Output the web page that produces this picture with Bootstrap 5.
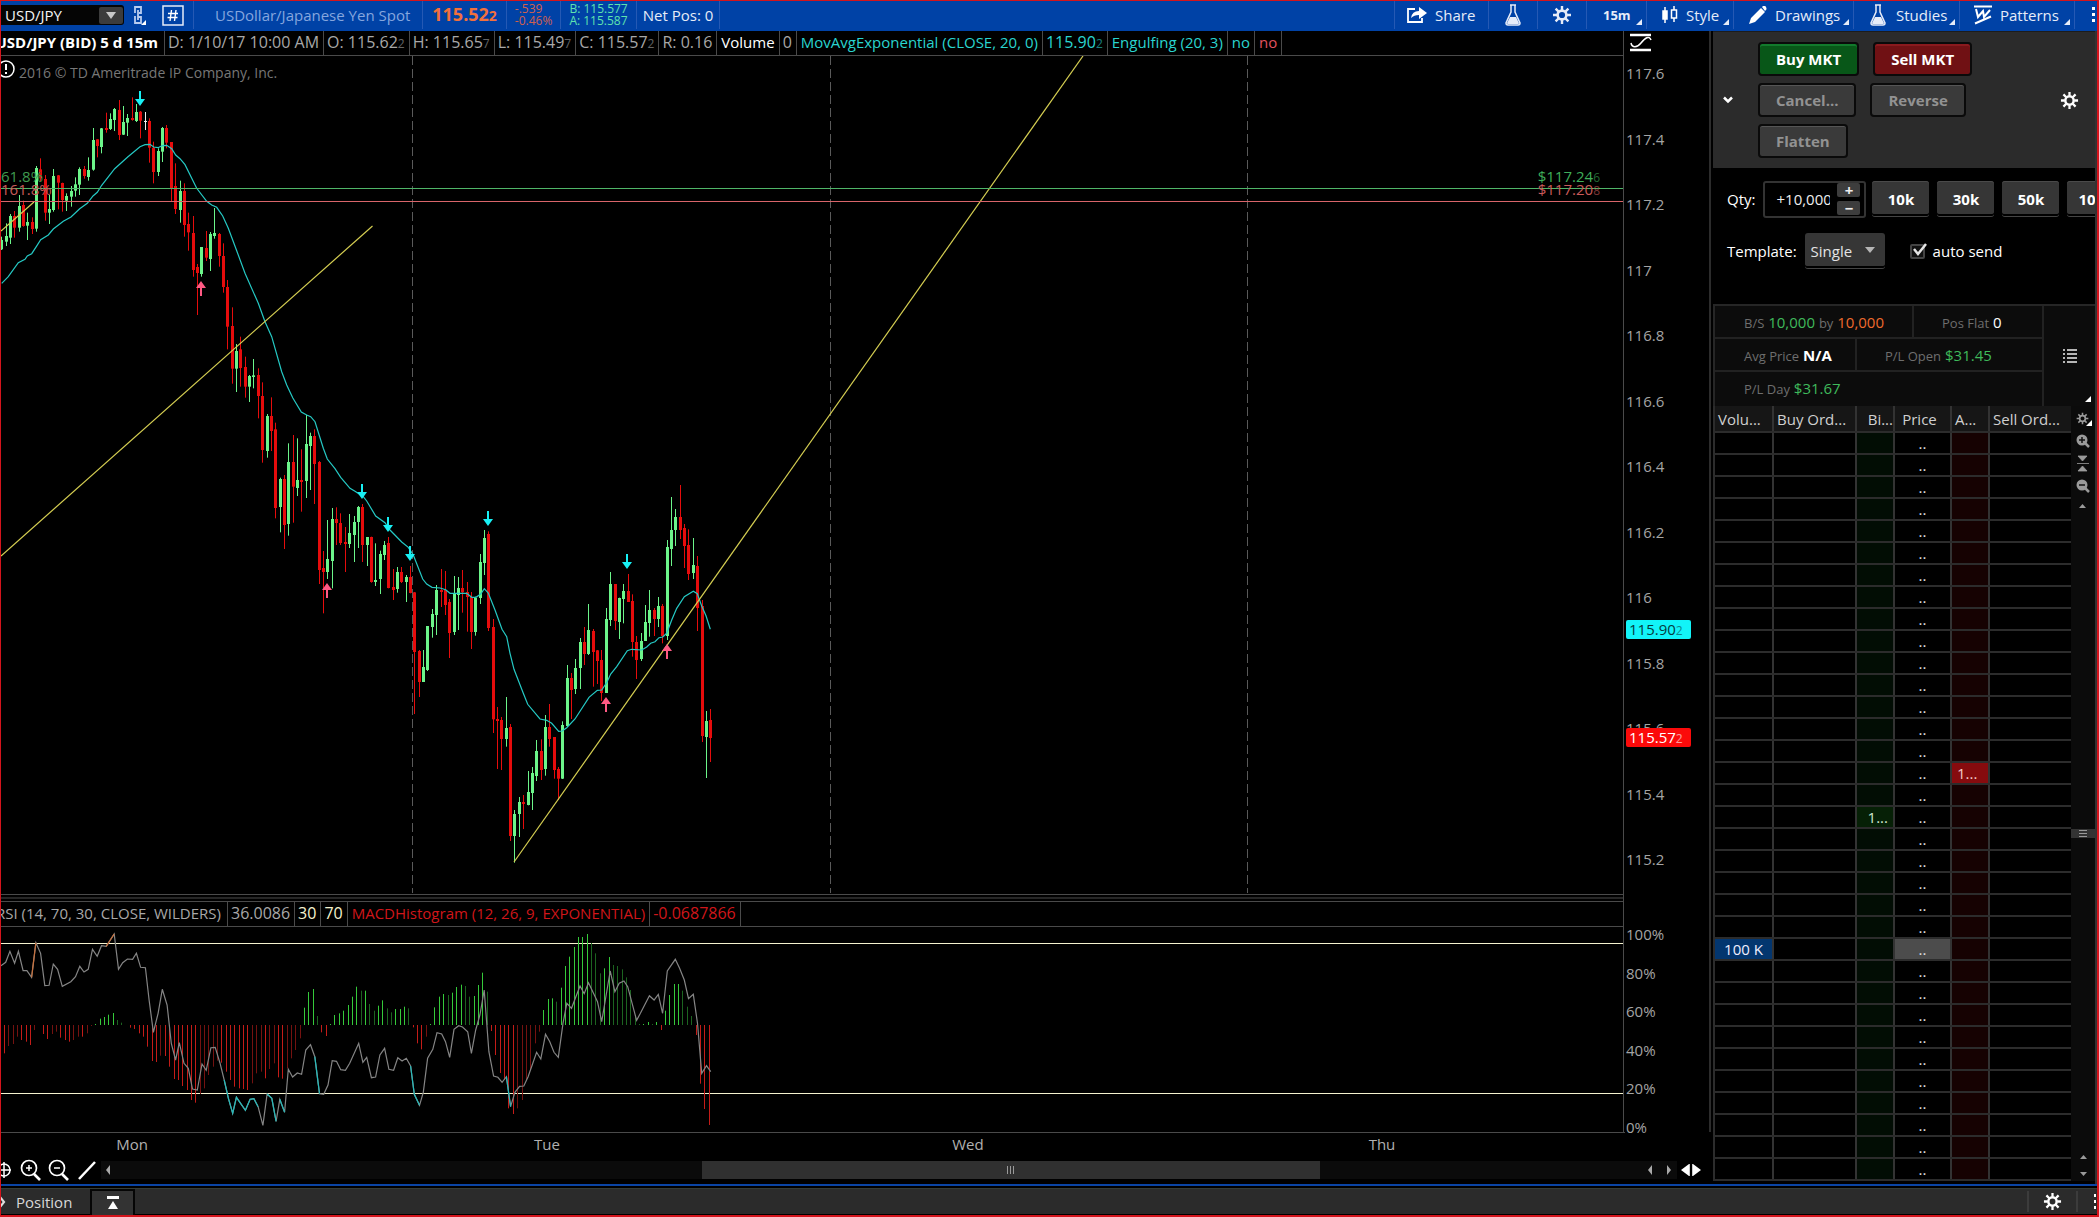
<!DOCTYPE html>
<html lang="en" data-bs-theme="dark">
<head>
<meta charset="utf-8">
<meta name="viewport" content="width=device-width, initial-scale=1">
<title>USD/JPY chart</title>
<link href="https://cdn.jsdelivr.net/npm/bootstrap@5.3.0/dist/css/bootstrap.min.css" rel="stylesheet">
<style>
:root{--rule:#4a4a4a;--grid:#2c2c2c;--blue:#0042a6}
body{font:15px/20px "Open Sans","Noto Sans",sans-serif;background:#000;color:#d8d8d8;min-height:100vh;border:solid #d4141c;border-width:1px 2px 2px 1px;overflow-x:hidden}
svg{display:block;flex:none}
button{font:inherit;color:inherit;background:none;border:0;padding:0}
svg text{font-size:15px}
svg text.notice{font-size:14px}
.pip{font-size:12px;opacity:.6}
.cy{color:#2ad4cf}.pk{color:#e0525f}.rd{color:#d0161a}.ivory{color:#f5f3cf}
.gn{color:#3fb95b}.og{color:#ee6a2c}
/* top toolbar */
.topbar{background:var(--blue);height:30px;padding-bottom:2px;color:#e6ecf8;overflow:hidden}
.topbar>*{flex:none;height:28px;border-right:1px solid #2559b4;display:flex;align-items:center;position:relative}
.topbar .corner{position:absolute;right:4px;bottom:4px}
.symbox{width:123px;height:20px;background:#050505;border-radius:0 3px 3px 0;overflow:hidden}
.symbox input{width:98px;background:none;border:0;color:#f4f4f4;padding:0 0 0 4px;height:20px}
.symbox button{width:24px;height:17px;background:#3c3c3c;border-radius:2px;display:flex;align-items:center;justify-content:center}
.desc{color:#85a6de;padding:0 12px 0 21px}
.quote{padding:0 9px}
.lastpx{color:#f2703c;font-size:18px;font-weight:700}
.lastpx .pip{font-size:14px;opacity:1}
.two{font-size:12px;line-height:12px}
.chg{color:#d2604e}.bidask{color:#5fe3ae}
.netpos{padding:0 6px}
.tfm{font-size:13px;font-weight:700}
.topbar .tool-share{width:95px;padding-left:12px;border-left:1px solid #2559b4}
.tool-ic{width:49px}.topbar .tool-tf{width:60px;padding-left:16px}
.topbar .tool-style{width:87px;padding-left:14px}.topbar .tool-draw{width:120px;padding-left:15px}
.topbar .tool-stud{width:106px;padding-left:14px}.topbar .tool-pat{width:115px;padding-left:14px}
.topbar .tool-more{width:22px;padding-left:17px;overflow:hidden}
/* study strips */
.strip{height:25px;border-bottom:1px solid var(--rule);color:#a8a8a8;overflow:hidden}
.strip>span{flex:none;border-right:1px solid var(--rule);padding:0 4px;line-height:23px;white-space:nowrap;display:block}
.strip>.num{font-size:16px;padding:0 4px 0 3px}
.strip .cut{display:flex;justify-content:flex-end;overflow:hidden;padding-right:6px}
.c-name{width:164px}.c-rsi{width:227px}
.chartcol{min-width:0}
.plotcol{min-width:0;border-right:1px solid var(--rule)}
.axiscol{width:87px;border-right:2px solid #2c2c2c}
.axiscol svg{overflow:visible}
.splitter{height:8px;border:solid var(--rule);border-width:1px 0}
.splitter i{display:block;height:2px;margin:2px 0;background:#262626}
.toolsrow{height:24px;margin-top:-2px;padding-right:6px}
.track{background:#0b0b0b;height:18px}
.thumb{background:#303030;height:18px;width:39.2%;margin-left:37.5%}
/* order panel */
.side{width:386px;border-right:2px solid #333;padding-left:2px}
.ordbox{background:#2b2b2b;height:137px;border-top:1px solid #1c1c1c}
.chev{padding-left:10px;width:45px;text-align:left}
.btnrow{gap:14px}
.btnstack{gap:7px}
.trade{border:2px solid #0a0a0a;border-radius:4px;font-weight:700;height:34px;padding:0 16px;color:#fff;background:#3a3a3a;box-shadow:inset 0 1px #555}
.trade.buy{background:#085718;box-shadow:inset 0 2px #127a2c}
.trade.sell{background:#701114;box-shadow:inset 0 2px #8a1a1e}
.trade.off{color:#929292}
.qtyrow{padding:3px 0 0 14px;height:59px;gap:8px}
.qtybox{width:103px;height:37px;border:2px solid #333;border-radius:3px;color:#eee;margin-right:-2px}
.qtybox input{width:54px;background:none;border:0;padding:0;color:inherit;margin-left:11px}
.qtybox button{width:23px;height:14px;background:#3d3d3d;line-height:12px;border-radius:2px;font-weight:700;display:block}
.preset{width:57px;height:36px;flex:none;background:#363636;border-radius:3px;font-weight:700;color:#fff;border-bottom:1px solid #444;box-shadow:inset 0 1px #4a4a4a,inset 0 -2px #000}
.tmplrow{padding-left:14px;height:48px;gap:8px;margin-bottom:29px}
.tmpl{width:80px;height:36px;background:#363636;color:#e4e4e4;border:0;border-bottom:1px solid #444;border-radius:3px;appearance:none;padding:0 6px;box-shadow:inset 0 -2px #000}
.selcaret{right:10px;top:14px}
.tick{appearance:none;width:15px;height:15px;margin:0;border:2px solid #444;border-radius:2px;background:#111}
.tickwrap{margin-left:17px}.tickmark{left:0;top:-2px}
.posbox{border:2px solid #262626;border-right:0;border-bottom:0;background:#0c0c0c;height:102px}
.posbox .lab{font-size:13px;color:#6e6e6e}
.posbox .line{border-bottom:2px solid #222;height:33px;padding-left:29px}
.posbox .cellr{border-right:2px solid #222;height:32px;line-height:32px}
.poscells{width:329px;border-right:2px solid #222}
.p1{width:170px}.p2{width:113px}.p1b,.p2b{line-height:32px;padding-left:28px}
table.ladder{table-layout:fixed;width:358px;border-collapse:collapse;border-left:2px solid #2c2c2c;flex:none}
.ladder th{height:26px;background:#161616;font-weight:400;color:#d0d0d0;padding:0 0 0 3px;overflow:hidden;white-space:nowrap}
.ladder th.mid{padding:0 6px 0 0;text-align:center}
.ladder td{height:22px;padding:0;line-height:20px;text-align:center;white-space:nowrap;color:#e0e0e0}
.ladder td.px{padding-top:1px;line-height:19px}
.ladder th,.ladder td{border-right:2px solid #333;border-bottom:2px solid var(--grid)}
.ladder th:last-child,.ladder td:last-child{border-right:0}
.ladder td.bid{background:#020d04}.ladder td.ask{background:#160202}
.ladder td.bidon{background:#062006;color:#cfe6cf;text-align:right;padding-right:5px}
.ladder td.askon{background:#860b0e;color:#f2caca;text-align:left;padding-left:5px}
.ladder td.vol{background:#03366f;color:#eef}
.ladder td.cur{background:#4c4c4c}
.rail{background:#0b0b0b;width:23px}
.rail .grip{background:#333;width:100%;height:9px}
.railtop{height:313px}
/* status bar */
.botbar{border-top:2px solid #0a44a4;height:31px}
.botbar>div{background:#2b2b2b;height:26px;margin-top:2px;border-top:1px solid #333c38}
.posbtn span{padding:0 18px 0 9px}
.tabup{width:45px;height:26px;background:#333;border:solid #050505;border-width:2px 2px 0}
.bsep{border-left:2px solid #3c3c3c;height:21px}
.botgear{padding:0 14px}.botmore{padding-left:16px}
</style>
<script src="https://cdn.jsdelivr.net/npm/bootstrap@5.3.0/dist/js/bootstrap.bundle.min.js"></script>
</head>
<body class="d-flex flex-column m-0">
<svg width="0" height="0" class="position-absolute" aria-hidden="true">
<defs>
<symbol id="gear" viewBox="0 0 20 20"><g stroke="currentColor" stroke-width="2.4"><path d="M10 1v4M10 15v4M1 10h4M15 10h4M3.6 3.6l3 3M13.4 13.4l3 3M3.6 16.4l3-3M13.4 6.600l3-3"/></g><circle cx="10" cy="10" r="4.400" fill="none" stroke="currentColor" stroke-width="2.600"/></symbol>
<symbol id="flask" viewBox="0 0 20 22"><path d="M7 1h6M8 1v7L3 19q0 2 2 2h10q2 0 2-2L12 8V1" fill="none" stroke="currentColor" stroke-width="1.500"/><path d="M7 13h6l3 6q0 1-1 1H5q-1 0-1-1z" fill="currentColor"/></symbol>
<symbol id="corner" viewBox="0 0 6 6"><path d="M6 0v6H0z" fill="currentColor"/></symbol>
<symbol id="mag" viewBox="0 0 22 22"><circle cx="9" cy="9" r="7.500" fill="none" stroke="currentColor" stroke-width="1.700"/><path d="M14 15l6 6" stroke="currentColor" stroke-width="2.600"/></symbol>
</defs></svg>

<header class="topbar d-flex">
  <div class="border-0"><div class="symbox d-flex align-items-center">
    <input type="text" value="USD/JPY" aria-label="Symbol">
    <button type="button" aria-label="Open symbol list"><svg width="10" height="7"><path d="M0 0h10L5 7z" fill="#c8c8c8"/></svg></button></div></div>
  <button type="button" class="border-0 justify-content-center" aria-label="Link"><svg width="30" height="24" fill="none" stroke="#b9cdf0" stroke-width="1.800"><path d="M11 10V4h6v6h-2M11 13v7h6v-6h-3M14 7v10"/><path d="M22 17v5h-5z" fill="#fff" stroke="none"/></svg></button>
  <button type="button" class="px-2" aria-label="Number"><svg width="23" height="21"><rect x="1" y="1" width="20" height="19" fill="none" stroke="#e6ecf8" stroke-width="1.500"/><path d="M9.500 5l-1.500 11M14 5l-1.500 11M6 8.500h10M5.500 12.500h10" stroke="#fff" stroke-width="1.400"/></svg></button>
  <div class="desc text-nowrap">USDollar/Japanese Yen Spot</div>
  <div class="quote lastpx"><span>115.52<span class="pip">2</span></span></div>
  <div class="two chg px-2"><span>-.539<br>-0.46%</span></div>
  <div class="two px-2 bidask"><span>B: 115.577<br>A: 115.587</span></div>
  <div class="netpos">Net Pos: 0</div>
  <div class="flex-fill border-0"></div>
  <button type="button" class="gap-2 tool-share"><svg width="20" height="18" fill="none" stroke="#fff" stroke-width="1.800"><path d="M8 3H1v13h14v-4"/><path d="M4 12q1-7 8-7V1l8 6-8 6V9q-5 0-8 3z" fill="#fff" stroke="none"/></svg>Share</button>
  <button type="button" class="tool-ic justify-content-center" aria-label="Analyze"><svg width="20" height="22"><use href="#flask"/></svg></button>
  <button type="button" class="tool-ic justify-content-center" aria-label="Settings"><svg width="20" height="20"><use href="#gear"/></svg></button>
  <button type="button" class="tool-tf tfm">15m<svg class="corner" width="6" height="6"><use href="#corner"/></svg></button>
  <button type="button" class="tool-style gap-2"><svg width="17" height="20" fill="none" stroke="#fff" stroke-width="1.500"><path d="M4 2v16M13 1v4M13 13v4"/><rect x="2" y="6" width="4" height="8" fill="#fff"/><rect x="10.500" y="5" width="5" height="8"/></svg>Style<svg class="corner" width="6" height="6"><use href="#corner"/></svg></button>
  <button type="button" class="tool-draw gap-2"><svg width="18" height="18"><path d="M0 18l2-6L12 2l4 4L6 16zM13 1l1-1q2-1 3 1t0 3l-1 1z" fill="#fff"/></svg>Drawings<svg class="corner" width="6" height="6"><use href="#corner"/></svg></button>
  <button type="button" class="tool-stud gap-2"><svg width="20" height="22"><use href="#flask"/></svg>Studies<svg class="corner" width="6" height="6"><use href="#corner"/></svg></button>
  <button type="button" class="tool-pat gap-2"><svg width="18" height="20" fill="none" stroke="#fff" stroke-width="1.800"><path d="M0 1.500h18M1 18.500l16-7M2 4l2 8 5-6 1 6 6-7" stroke-width="2"/></svg>Patterns<svg class="corner" width="6" height="6"><use href="#corner"/></svg></button>
  <button type="button" class="tool-more border-0" aria-label="More"><svg width="4" height="16" fill="#fff"><path d="M0 0h3v3H0zM0 6h3v3H0zM0 12h3v3H0z"/></svg></button>
</header>

<main class="d-flex flex-fill">
  <section class="flex-fill d-flex flex-column chartcol">
    <div class="d-flex">
      <div class="plotcol flex-fill">
        <div class="strip d-flex">
          <span class="cut c-name fw-bold text-white">USD/JPY (BID) 5 d 15m</span><span class="num">D: 1/10/17 10:00 AM</span><span class="num">O: 115.62<span class="pip">2</span></span><span class="num">H: 115.65<span class="pip">7</span></span><span class="num">L: 115.49<span class="pip">7</span></span><span class="num">C: 115.57<span class="pip">2</span></span><span class="num">R: 0.16</span><span class="text-white">Volume</span><span class="num">0</span><span class="cy">MovAvgExponential (CLOSE, 20, 0)</span><span class="num cy">115.90<span class="pip">2</span></span><span class="cy">Engulfing (20, 3)</span><span class="cy">no</span><span class="pk">no</span>
        </div>
        <svg id="price" width="100%" height="838" role="img" aria-label="USD/JPY 15 minute candles"></svg>
        <div class="splitter"><i></i></div>
        <div class="strip d-flex">
          <span class="cut c-rsi">RSI (14, 70, 30, CLOSE, WILDERS)</span><span class="num">36.0086</span><span class="num ivory">30</span><span class="num ivory">70</span><span class="rd">MACDHistogram (12, 26, 9, EXPONENTIAL)</span><span class="num rd">-0.0687866</span>
        </div>
        <svg id="study" width="100%" height="205" role="img" aria-label="RSI and MACD histogram"></svg>
      </div>
      <div class="axiscol">
        <svg id="scale" width="84" height="1101" role="img" aria-label="Price scale"></svg>
      </div>
    </div>
    <svg id="days" width="100%" height="28" role="img" aria-label="Days"></svg>
    <div class="d-flex align-items-center toolsrow">
      <svg width="100" height="24" fill="none" stroke="#fff"><circle cx="3" cy="12" r="6" stroke-width="1.500"/><path d="M3 4v16M-4 12h14" stroke-width="1.500"/>
        <g color="#fff"><use href="#mag" x="19" y="1" width="22" height="22"/><use href="#mag" x="47" y="1" width="22" height="22"/></g><path d="M25 10h6M28 7v6M53 10h6" stroke-width="1.500"/><path d="M78 21l16-17" stroke-width="2.500"/></svg>
      <div class="track flex-fill d-flex align-items-center">
        <svg width="6" height="10" class="ms-1"><path d="M5 0v10L1 5z" fill="#aaa"/></svg>
        <div class="thumb d-flex justify-content-center align-items-center"><svg width="7" height="8"><path d="M.5 0v8M3.500 0v8M6.500 0v8" stroke="#999"/></svg></div>
        <svg width="26" height="10" class="ms-auto me-1"><path d="M5 0v10L1 5zM20 0v10l4-5z" fill="#aaa"/></svg>
      </div>
      <svg width="28" height="16"><path d="M12 2v12L4 8zM16 2v12l8-6z" fill="#fff"/><path d="M12.500 2v12M15.500 2v12" stroke="#ccc"/></svg>
    </div>
  </section>

  <aside class="side flex-shrink-0">
    <div class="ordbox d-flex align-items-center">
      <button type="button" class="chev" aria-label="Collapse"><svg width="10" height="8"><path d="M1 1.500l4 4 4-4" fill="none" stroke="#fff" stroke-width="2.500"/></svg></button>
      <div class="flex-fill d-flex flex-column btnstack">
        <div class="d-flex btnrow"><button type="button" class="trade buy">Buy MKT</button><button type="button" class="trade sell">Sell MKT</button></div>
        <div class="d-flex btnrow"><button type="button" class="trade off">Cancel...</button><button type="button" class="trade off">Reverse</button></div>
        <div class="d-flex btnrow"><button type="button" class="trade off">Flatten</button></div>
      </div>
      <button type="button" class="text-white pe-3" aria-label="Order settings"><svg width="19" height="19"><use href="#gear"/></svg></button>
    </div>
    <div class="qtyrow d-flex align-items-center text-white overflow-hidden">
      <label for="qty">Qty:</label>
      <div class="qtybox d-flex align-items-center justify-content-between flex-shrink-0"><input id="qty" type="text" value="+10,000">
        <div class="d-flex flex-column gap-1 me-1"><button type="button">+</button><button type="button">−</button></div></div>
      <button type="button" class="preset">10k</button><button type="button" class="preset">30k</button><button type="button" class="preset">50k</button><button type="button" class="preset">100k</button>
    </div>
    <div class="tmplrow d-flex align-items-center text-white">
      <label for="tmpl">Template:</label>
      <div class="position-relative"><select id="tmpl" class="tmpl"><option>Single</option></select><svg class="selcaret position-absolute" width="10" height="6"><path d="M0 0h10L5 6z" fill="#b5b5b5"/></svg></div>
      <div class="position-relative tickwrap"><input id="auto" class="tick d-block" type="checkbox" checked><svg class="tickmark position-absolute" width="18" height="16"><path d="M4 7l4 5 8-10" fill="none" stroke="#e6e6e6" stroke-width="2.500"/></svg></div>
      <label for="auto">auto send</label>
    </div>
    <div class="posbox d-flex">
      <div class="poscells">
        <div class="line d-flex"><div class="cellr p1"><span class="lab">B/S</span> <span class="gn">10,000</span> <span class="lab">by</span> <span class="og">10,000</span></div><div class="p1b"><span class="lab">Pos Flat</span> <span class="text-white">0</span></div></div>
        <div class="line d-flex"><div class="cellr p2"><span class="lab">Avg Price</span> <b class="text-white">N/A</b></div><div class="p2b"><span class="lab">P/L Open</span> <span class="gn">$31.45</span></div></div>
        <div class="line d-flex border-0"><div class="p2b ps-0"><span class="lab">P/L Day</span> <span class="gn">$31.67</span></div></div>
      </div>
      <div class="flex-fill d-flex align-items-center justify-content-center position-relative"><svg width="14" height="14"><path d="M0 1h2M0 5h2M0 9h2M0 13h2M4 1h10M4 5h10M4 9h10M4 13h10" stroke="#eee" stroke-width="1.600"/></svg><svg class="position-absolute bottom-0 end-0 me-1 mb-1 text-white" width="6" height="6"><use href="#corner"/></svg></div>
    </div>
    <div class="d-flex">
      <table class="ladder">
        <colgroup><col style="width:59px"><col style="width:83px"><col style="width:38px"><col style="width:57px"><col style="width:38px"><col></colgroup>
        <thead><tr><th>Volu...</th><th>Buy Ord...</th><th class="text-end pe-0">Bi...</th><th class="mid">Price</th><th>A...</th><th>Sell Ord...</th></tr></thead>
        <tbody id="ladder"></tbody>
      </table>
      <div class="rail flex-fill d-flex flex-column align-items-center">
        <svg width="23" height="110" color="#9a9a9a"><use href="#gear" x="4" y="6" width="13" height="13"/><path d="M20 14v6h-6z" fill="#fff"/>
          <g id="zin"><circle cx="10" cy="34" r="5.500" fill="#9a9a9a"/><path d="M13 37l4 4" stroke="#9a9a9a" stroke-width="2.500"/><path d="M7 34h6" stroke="#111" stroke-width="1.500"/></g><path d="M10 31v6" stroke="#111" stroke-width="1.500"/>
          <path d="M6 50h9l-4.500 5zM6 65h9l-4.500-5zM5 57.500h12" fill="#9a9a9a" stroke="#9a9a9a" stroke-width=".8"/>
          <use href="#zin" y="45"/><path d="M7 102h7l-3.500-4z" fill="#9a9a9a"/></svg>
        <div class="railtop"></div>
        <div class="grip d-flex justify-content-center align-items-center"><svg width="8" height="7"><path d="M0 .5h8M0 3.500h8M0 6.500h8" stroke="#999"/></svg></div>
        <svg class="mt-auto" width="9" height="34"><path d="M1 12h7L4.500 8zM1 25h7l-3.500 4z" fill="#9a9a9a"/></svg>
      </div>
    </div>
  </aside>
</main>

<footer class="botbar"><div class="d-flex align-items-center">
  <button type="button" class="d-flex align-items-center posbtn"><svg width="6" height="12"><path d="M-1 1l4 5-4 5" fill="none" stroke="#ddd" stroke-width="2.200"/></svg><span>Position</span></button>
  <button type="button" class="tabup d-flex align-items-center justify-content-center" aria-label="Expand"><svg width="12" height="13"><path d="M0 0h12v3H0zM6 5l5 8H1z" fill="#fff"/></svg></button>
  <div class="flex-fill"></div><span class="bsep"></span>
  <button type="button" class="text-white botgear" aria-label="Settings"><svg width="19" height="19"><use href="#gear"/></svg></button>
  <span class="bsep"></span><button type="button" class="botmore" aria-label="More"><svg width="3" height="16" fill="#fff"><path d="M0 0h2v3H0zM0 6h2v3H0zM0 12h2v3H0z"/></svg></button>
</div></footer>

<script>
const NS='http://www.w3.org/2000/svg', STEP=4.35, X0=1.67;
const el=(p,n,a,t)=>{const e=document.createElementNS(NS,n);for(const k in a)e.setAttribute(k,a[k]);if(t!=null)e.innerHTML=t;p.appendChild(e);return e};
// candles: colour, high, body top, body bottom, low (in thirds of a pixel from the session base)
const sessions=[
{base:80,rows:`G 470 480 508 510|G 430 468 485 498|G 402 408 473 492|R 393 408 443 473|G 345 378 443 455|R 362 375 438 440|G 398 426 437 480|R 412 426 447 462|G 258 264 446 455|R 235 268 295 305|R 285 297 398 422|G 345 387 398 432|G 267 288 390 395|R 285 286 308 388|R 308 309 360 395|G 340 348 362 393|G 318 333 350 380|G 292 313 332 350|G 262 267 314 345|R 258 267 288 296|G 232 270 291 302|G 144 180 269 272|R 178 178 198 232|G 144 145 201 220|R 98 144 150 158|G 100 117 147 150|G 84 87 120 153|R 60 90 165 180|G 78 126 164 165|G 102 114 128 168|R 52 114 120 122|G 72 96 123 126|R 93 95 122 175|W 96 123 126 150|R 115 123 203 248|R 185 203 276 310|G 205 213 276 288|G 141 144 215 246|R 135 144 188 205|R 186 186 325 365|R 250 318 387 402|G 302 333 390 428|R 310 333 435 470|R 398 432 457 512|R 408 459 570 590|R 552 561 579 705|G 501 501 582 590|R 453 504 533 543|G 456 462 537 573|G 384 459 468 476|R 459 462 528 560|R 490 528 621 638|R 600 621 740 808|R 682 738 866 911|G 792 813 866 936|R 770 808 864 920|R 830 861 920 953`},
{base:370,rows:`G 15 18 50 96|G -33 16 21 55|R -5 15 78 145|R 37 78 240 278|G 132 138 243 263|R 82 138 183 243|R 158 178 414 445|G 323 327 411 487|R 315 327 465 537|G 220 276 462 497|R 195 276 350 458|G 205 330 354 378|R 238 330 336 425|G 135 222 333 384|G 188 198 228 360|R 178 198 282 402|R 273 276 600 642|R 543 594 606 730|G 450 567 606 627|G 414 447 573 655|R 412 447 459 525|R 430 459 519 525|R 471 516 522 606|G 432 489 522 534|G 438 456 495 576|G 408 411 456 534|R 402 411 525 576|G 501 501 525 588|R 500 501 636 638|G 520 630 636 648|G 542 552 627 672|G 513 525 555 570|R 501 519 654 655|R 597 651 660 690|G 591 606 657 668|R 591 606 636 639|G 615 621 636 696|R 588 621 669 670|R 666 667 846 1032|R 840 843 936 981|G 840 891 936 936|G 768 768 900 903|G 717 732 771 803|G 645 660 735 795|R 597 660 666 711|R 603 660 705 735|R 687 696 789 864|G 618 672 786 795|G 621 654 675 780|R 600 654 667 728|R 636 666 681 785|R 666 681 786 837|G 680 684 786 797|G 552 576 684 702|G 480 504 579 615|R 484 492 774 783|R 747 771 1048 1089|R 1011 1047 1053 1197`},
{base:470,rows:`R 741 750 807 900|G 681 774 807 830|R 762 771 1098 1113|G 1020 1032 1098 1178|G 981 996 1032 1101|R 975 996 1002 1077|G 903 966 1005 1006|G 891 909 969 1020|G 810 843 918 933|R 808 843 900 930|G 735 771 897 917|R 702 771 807 830|R 801 801 900 926|R 891 897 926 990|G 754 765 926 927|G 585 624 768 770|R 609 624 660 747|G 567 594 657 672|G 504 516 594 657|R 471 516 552 585|G 402 480 552 555|R 477 483 546 650|R 540 541 573 642|R 540 570 669 693|G 414 447 669 669|G 306 342 450 468|R 342 342 453 480|G 383 384 456 507|G 342 363 387 460|R 312 363 396 396|R 373 393 516 560|R 498 516 570 627|G 489 513 567 573|G 405 456 513 513|G 360 420 459 500|R 414 420 447 498|G 381 408 447 471|R 402 408 498 520|G 210 231 498 510|G 81 180 237 288|G 117 141 180 228|R 45 141 180 207|R 162 174 228 294|R 178 225 312 330|G 204 285 309 327|R 258 288 414 483|R 390 408 798 816|G 723 753 801 924|R 717 750 804 876`}];
// moving average: x origin, y origin, points in thirds of a pixel
const ema=[[0,80,'5,610 25,590 55,548 75,538 82,528 95,521 109,500 122,479 145,465 160,447 190,424 213,411 239,386 262,370 279,348 292,337 305,316 344,266 383,231 420,200 435,194 450,193 461,201 474,203 487,197 500,196 515,206 527,225 540,236 555,254 590,325 620,364 635,375 650,382 668,408 685,445 710,512 735,580 775,670 795,725 815,770'],
[200,370,'245,5 260,45 278,83 304,126 320,135 332,140 345,155 370,235 382,267 405,296 422,322 450,355 465,364 490,380 500,393 527,438 555,458 570,480 605,516 625,532 640,555 668,627 680,642 696,652 720,654 737,659 750,670 800,670 815,682 828,682 842,672'],
[480,470,'13,356 25,369 45,420 66,478 80,500 90,550 102,598 130,670 143,703 180,747 200,751 215,760 236,784 247,783 260,773 285,747 327,682 352,661 365,660 380,638 392,612 410,590 442,542 455,538 485,540 500,531 512,520 525,515 537,503 548,501 560,490 575,450 590,415 613,380 640,364 652,371 665,408 678,437 691,478']];
const price=document.getElementById('price');
const P=el(price,'g',{transform:'translate(-1,-56)'});
for(const x of [412.5,830.5,1247.5]) el(P,'line',{x1:x,x2:x,y1:56,y2:893,stroke:'#5a5a5a','stroke-dasharray':'9 4'});
const col={G:'#6cf58a',R:'#e60c0c',W:'#f0f0f0'};
let i=0;
for(const s of sessions) for(const r of s.rows.split('|')){
  const [c,h,t,b,l]=r.split(' '), Y=v=>s.base+v/3, x=Math.floor(X0+STEP*i++);
  el(P,'rect',{x:x,width:1,y:Y(+h),height:(l-h)/3,fill:col[c]});
  el(P,'rect',{x:x-1,width:3,y:Y(+t),height:Math.max(1,(b-t)/3),fill:col[c]});
}
el(P,'polyline',{points:ema.map(([dx,dy,s])=>s.split(' ').map(p=>{const[a,b]=p.split(',');return(dx+a/3).toFixed(1)+','+(dy+b/3).toFixed(1)}).join(' ')).join(' '),fill:'none',stroke:'#25c9c4','stroke-width':1.2});
for(const [a,b,c,d] of [[1,556,372.5,226],[1,231,34,202],[514,862,1083,56]]) el(P,'line',{x1:a,y1:b,x2:c,y2:d,stroke:'#d6cf52','stroke-width':1.2});
el(P,'line',{x1:0,x2:'110%',y1:188.5,y2:188.5,stroke:'#4fb568'});
el(P,'line',{x1:0,x2:'110%',y1:201.5,y2:201.5,stroke:'#d9656a'});
for(const [x,y] of [[140,91],[362,484],[388,517],[410,546],[488,511],[627,554]]) el(P,'path',{d:`M${x-1} ${y}h2v8h4l-5 7-5-7h4z`,fill:'#18f0f4'});
for(const [x,y] of [[201,281],[327,583],[606,697],[667,644]]) el(P,'path',{d:`M${x} ${y}l5 7h-4v8h-2v-8h-4z`,fill:'#ff5a84'});
el(P,'text',{x:1,y:182,fill:'#3f9a4f'},'61.8%'); el(P,'text',{x:1,y:195,fill:'#c95a5a'},'161.8%');
el(price,'text',{x:'100%',dx:-23,y:126,fill:'#3fae5a','text-anchor':'end'},'$117.24<tspan class="pip">6</tspan>');
el(price,'text',{x:'100%',dx:-23,y:139,fill:'#c95a5a','text-anchor':'end'},'$117.20<tspan class="pip">8</tspan>');
el(P,'circle',{cx:6,cy:69,r:8,fill:'none',stroke:'#fff','stroke-width':1.5}); el(P,'path',{d:'M6 64v6M6 72v2',stroke:'#fff','stroke-width':2});
el(P,'text',{x:19,y:78,fill:'#777',class:'notice'},'2016 © TD Ameritrade IP Company, Inc.');

// lower study
const study=document.getElementById('study'), S=el(study,'g',{transform:'translate(-1,-927)'}), K=2.119;
for(const y of [943,1093]) el(S,'rect',{x:0,width:'110%',y:y,height:1,fill:'#f5f3cf'});
const hist='450 490 468 462 440 450 455 465 420 405 432 447 432 425 443 450 455 450 440 440 430 408 402 386 381 374 369 390 398 405 413 417 430 440 470 513 516 497 498 530 567 570 588 600 630 638 612 595 555 530 512 518 545 570 590 595 597 600 580 550 545 565 537 520 562 566 535 505 480 445 353 306 297 378 427 438 402 375 370 362 345 320 290 302 302 342 362 347 331 355 367 357 357 350 355 412 460 478 440 402 352 320 312 315 308 291 284 288 320 318 285 248 305 423 495 549 570 655 672 655 630 570 540 460 425 360 327 325 335 293 228 200 171 141 141 132 159 190 250 235 201 225 228 238 262 300 375 402 402 396 402 396 420 362 315 282 282 302 350 378 435 581 657 705'.split(' ').map(Number);
hist.forEach((v,n)=>{const d=v-405,p=(hist[n-1]??405)-405,up=d<0,strong=Math.abs(d)>=Math.abs(p)||d*p<0;
  el(S,'rect',{x:Math.floor(STEP*n),width:1,y:1025+Math.min(0,d/3),height:Math.abs(d/3),fill:up?(strong?'#35c93a':'#1c6420'):(strong?'#c41c18':'#741210')})});
const rsi='2,227 12,217 21,184 31,220 39,184 49,242 57,242 67,262 76,158 86,190 95,287 104,286 113,222 122,238 132,289 150,275 160,260 169,229 178,246 187,238 196,178 206,199 215,167 225,169 242,132 251,238 260,218 270,207 281,208 289,190 298,232 308,233 316,330 325,427 335,370 344,298 354,345 363,460 372,510 380,458 390,520 399,535 408,597 418,600 428,522 437,541 447,473 456,472 466,518 475,570 484,625 493,670 501,622 520,661 530,628 538,626 547,650 557,706 566,612 576,625 585,694 593,628 603,667 611,538 620,561 630,549 639,553 648,480 658,464 667,500 677,611 686,613 695,585 704,512 713,514 722,539 732,541 741,520 760,460 769,517 777,502 787,563 796,561 805,495 815,475 824,538 834,541 843,503 852,513 861,505 870,528 878,613 889,646 897,607 906,505 917,478 926,428 936,432 944,455 953,502 962,418 972,407 980,411 991,425 999,490 1008,420 1017,375 1026,300 1036,485 1046,558 1055,562 1064,577 1073,560 1082,650 1091,607 1101,589 1110,588 1119,560 1129,520 1137,487 1146,507 1156,433 1165,455 1174,487 1183,502 1193,400 1201,340 1211,355 1229,288 1238,311 1247,278 1266,335 1275,395 1293,243 1303,305 1312,280 1322,273 1330,290 1349,391 1357,370 1376,317 1386,330 1395,313 1404,370 1414,243 1431,208 1440,235 1450,270 1459,326 1469,313 1478,400 1487,550 1497,527 1506,545'.split(' ').map(p=>p.split(',').map(Number));
const line=(a,c)=>el(S,'polyline',{points:a.map(([x,y])=>(x/K).toFixed(1)+','+(890+y/3).toFixed(1)).join(' '),fill:'none',stroke:c,'stroke-width':1.2});
line(rsi,'#858585');
const part=(a,b)=>rsi.filter(p=>p[0]>=a&&p[0]<=b);
line(part(67,76),'#c8703c'); line(part(225,242),'#c8703c');
for(const [a,b] of [[475,547],[566,585],[593,603],[667,677],[870,889],[1073,1082]]) line(part(a,b),'#25b9b9');

// scales
const sc=document.getElementById('scale'), A=el(sc,'g',{transform:'translate(-1625,-31)'});
el(A,'path',{d:'M1631 35h21M1631 50h21',stroke:'#fff','stroke-width':2.5}); el(A,'path',{d:'M1632 43c1 5 6 5 10 0s8-8 10-3',fill:'none',stroke:'#fff','stroke-width':1.5});
for(let n=0;n<13;n++) el(A,'text',{x:1627,y:79+65.5*n,fill:'#a4a4a4'},String(+(117.6-.2*n).toFixed(1)));
for(const [y,f,c,a,b] of [[629,'#12f4f8','#053c3e','115.90',2],[737,'#fb0a0a','#fff','115.57',2]]){
  el(A,'rect',{x:1627,y:y-9,width:65,height:19,rx:2,fill:f}); el(A,'text',{x:1630,y:y+6,fill:c},`${a}<tspan class="pip">${b}</tspan>`);}
for(let n=0;n<6;n++) el(A,'text',{x:1627,y:940+38.6*n,fill:'#a4a4a4'},(100-20*n)+'%');
const D=document.getElementById('days');
el(D,'line',{x1:0,x2:1624,y1:.5,y2:.5,stroke:'#4a4a4a'});
for(const [x,t] of [[131,'Mon'],[546,'Tue'],[967,'Wed'],[1381,'Thu']]) el(D,'text',{x:x,y:18,'text-anchor':'middle',fill:'#b0b0b0'},t);

// ladder rows
document.getElementById('ladder').innerHTML=Array.from({length:34},(_,r)=>`<tr><td${r==23?' class="vol">100 K':'>'}</td><td></td><td class="bid${r==17?' bidon">1...':'">'}</td><td class="px${r==23?' cur':''}">..</td><td class="ask${r==15?' askon">1...':'">'}</td><td></td></tr>`).join('');
</script>
</body>
</html>
